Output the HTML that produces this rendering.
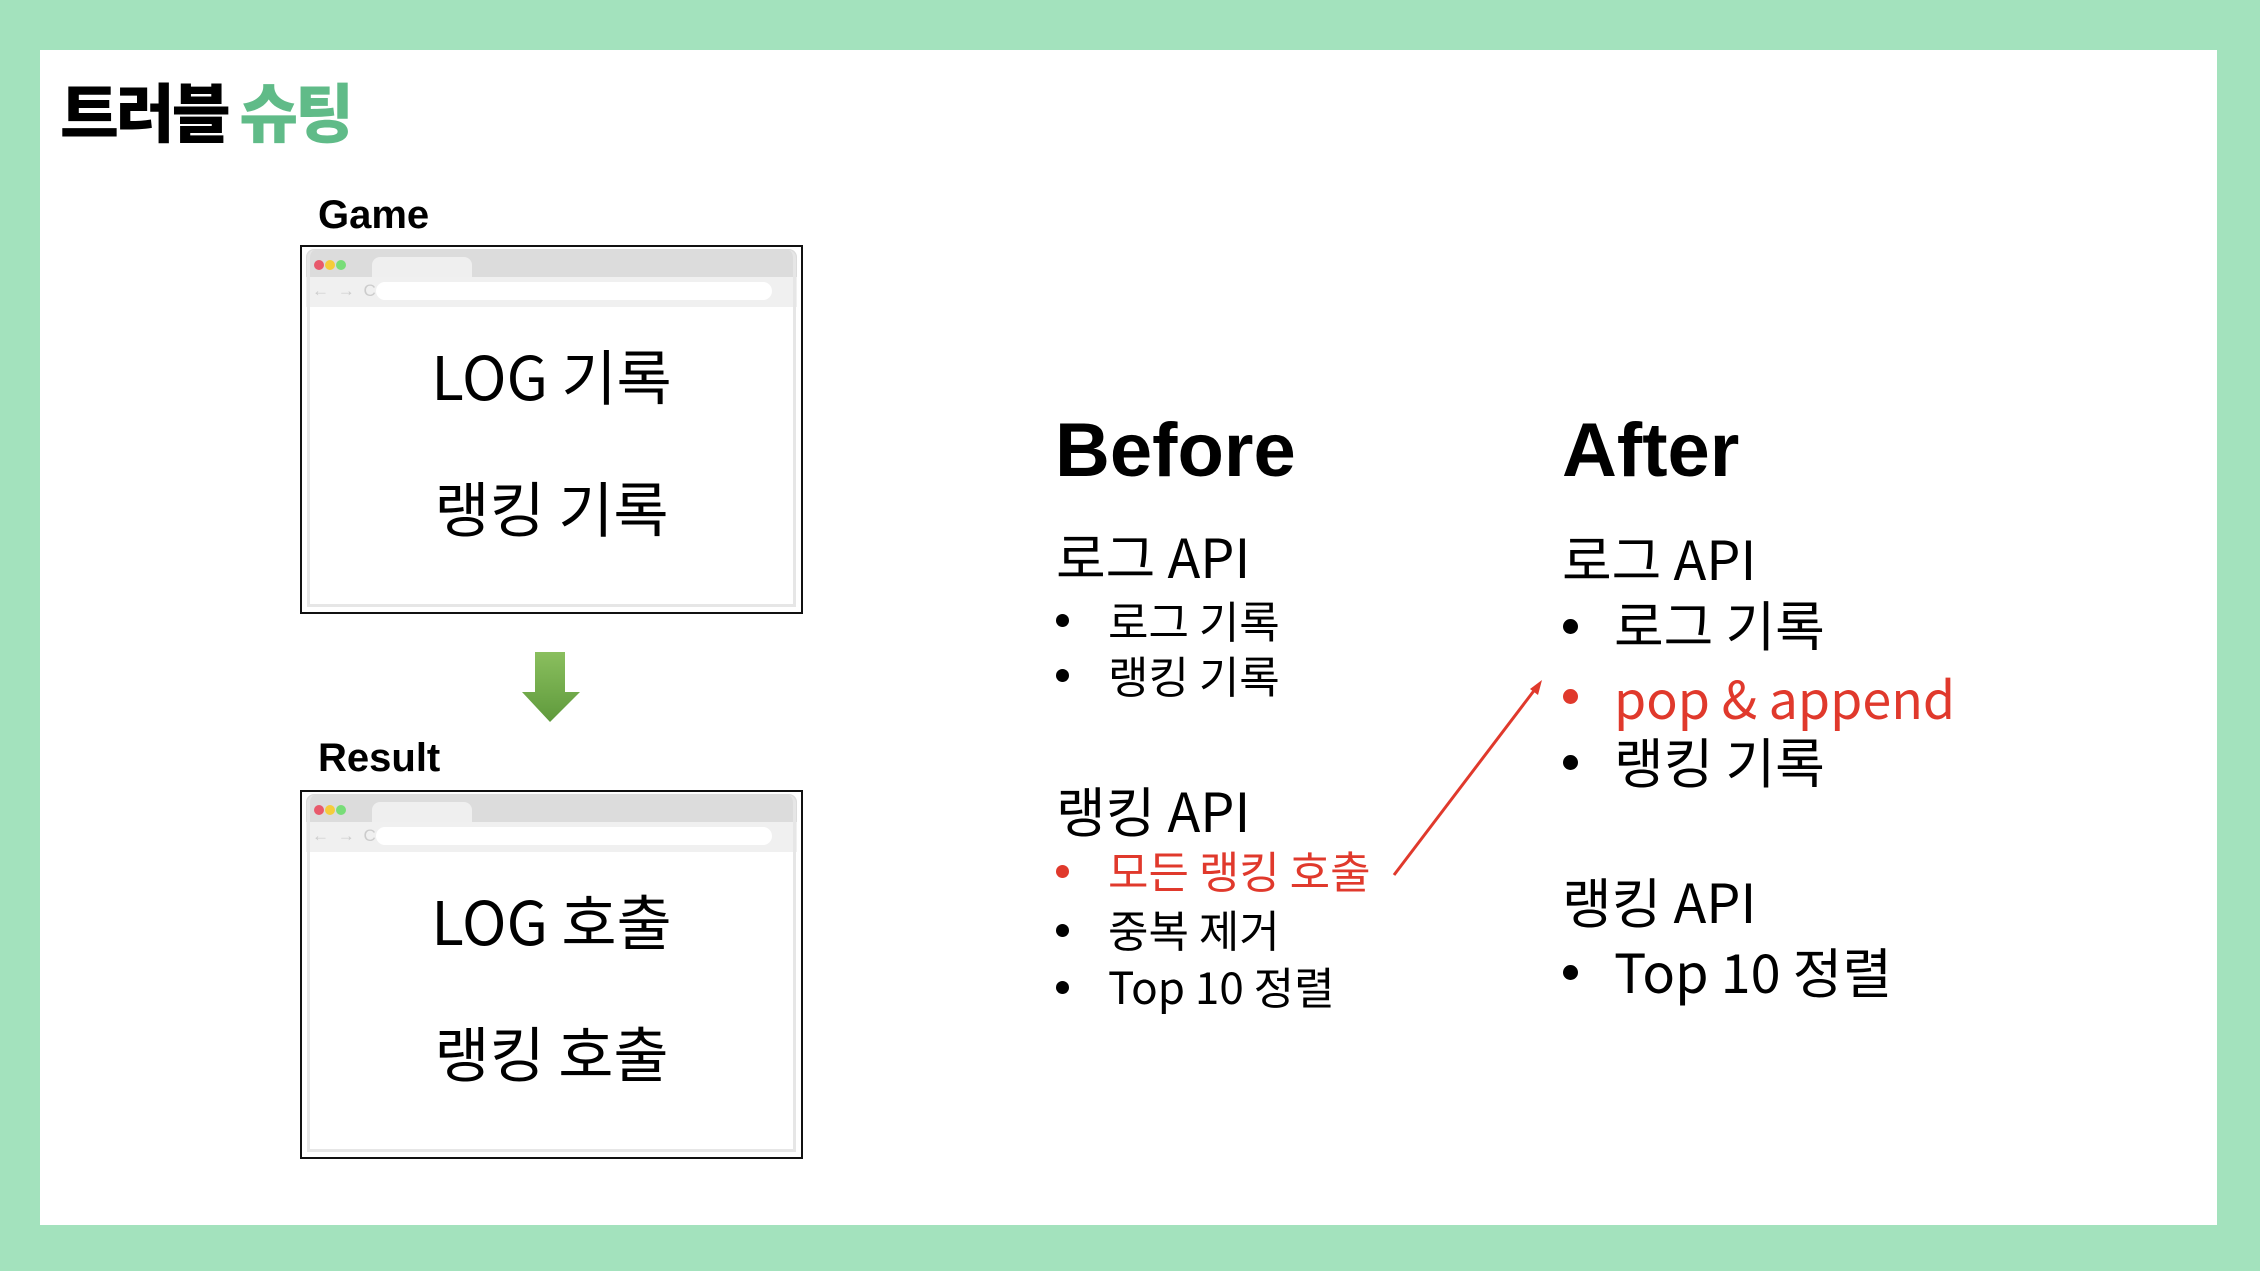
<!DOCTYPE html>
<html><head><meta charset="utf-8"><style>
body{margin:0;width:2260px;height:1271px;background:#a3e2bd;position:relative;overflow:hidden;font-family:"Liberation Sans","Noto Sans CJK KR",sans-serif;}
.w{position:absolute;left:40px;top:50px;width:2177px;height:1175px;background:#fff;}
.t{position:absolute;white-space:nowrap;line-height:1;}
.k{font-family:"Noto Sans CJK KR","Liberation Sans",sans-serif;}
.br{position:absolute;left:300px;width:503px;height:369px;border:2px solid #111;background:#fff;box-sizing:border-box;}
.br .in{position:absolute;left:5px;top:3px;right:5px;bottom:5px;border:3px solid #e6e6e6;border-top:none;border-radius:8px 8px 0 0;}
.br .tab{position:absolute;left:4px;top:2px;right:4px;height:28px;background:#dcdcdc;border-radius:8px 8px 0 0;}
.br .tb{position:absolute;left:70px;top:10px;width:100px;height:20px;background:#efefef;border-radius:8px 8px 0 0;}
.br .ad{position:absolute;left:4px;top:30px;right:4px;height:30px;background:#f0f0f0;}
.br .ad i{position:absolute;left:70px;top:5px;right:25px;height:18px;background:#fff;border-radius:9px;}
.dot{position:absolute;top:13px;width:10px;height:10px;border-radius:50%;}
.nav{position:absolute;left:10px;top:34px;font-size:17px;color:#ccc;letter-spacing:2px;}
.bul{position:absolute;width:13px;height:13px;border-radius:50%;background:#000;}
.bb{width:15px;height:15px;}
</style></head><body>
<div class="w"></div>
<div class="t k" style="left:60px;top:78px;font-size:64px;font-weight:900;letter-spacing:-3px;">트러블 <span style="color:#60bb88">슈팅</span></div>
<div class="t" style="left:318px;top:195px;font-size:40px;font-weight:bold;">Game</div>
<div class="t" style="left:318px;top:738px;font-size:40px;font-weight:bold;">Result</div>

<div class="br" style="top:245px">
<div class="tab"></div><div class="tb"></div><div class="ad"><i></i></div>
<div class="dot" style="left:12px;background:#e8596b"></div><div class="dot" style="left:23px;background:#f5cc3b"></div><div class="dot" style="left:34px;background:#78dd78"></div>
<div class="nav">← → C</div>
<div class="in"></div>
<div class="t k" style="left:0;right:0;text-align:center;top:98px;font-size:60px;">LOG 기록</div>
<div class="t k" style="left:0;right:0;text-align:center;top:230px;font-size:60px;">랭킹 기록</div>
</div>
<div class="br" style="top:790px">
<div class="tab"></div><div class="tb"></div><div class="ad"><i></i></div>
<div class="dot" style="left:12px;background:#e8596b"></div><div class="dot" style="left:23px;background:#f5cc3b"></div><div class="dot" style="left:34px;background:#78dd78"></div>
<div class="nav">← → C</div>
<div class="in"></div>
<div class="t k" style="left:0;right:0;text-align:center;top:98px;font-size:60px;">LOG 호출</div>
<div class="t k" style="left:0;right:0;text-align:center;top:230px;font-size:60px;">랭킹 호출</div>
</div>

<svg style="position:absolute;left:0;top:0" width="2260" height="1271">
<defs><linearGradient id="g" x1="0" x2="0" y1="0" y2="1"><stop offset="0" stop-color="#8abf5e"/><stop offset="1" stop-color="#5f9a3c"/></linearGradient></defs>
<polygon points="535,652 565,652 565,692 580,692 550,722 522,692 535,692" fill="url(#g)"/>
<line x1="1394" y1="875" x2="1536" y2="688" stroke="#e0392c" stroke-width="3"/>
<polygon points="1542,680 1530,689 1538,695" fill="#e0392c"/>
</svg>

<div class="t" style="left:1055px;top:413px;font-size:76px;font-weight:bold;">Before</div>
<div class="t" style="left:1562px;top:413px;font-size:76px;font-weight:bold;">After</div>

<div class="t k" style="left:1056px;top:528px;font-size:54px;">로그 API</div>
<div class="bul" style="left:1056px;top:614px"></div><div class="t k" style="left:1108px;top:597px;font-size:44px;">로그 기록</div>
<div class="bul" style="left:1056px;top:669px"></div><div class="t k" style="left:1108px;top:652px;font-size:44px;">랭킹 기록</div>
<div class="t k" style="left:1056px;top:782px;font-size:54px;">랭킹 API</div>
<div class="bul" style="left:1056px;top:865px;background:#e0392c"></div><div class="t k" style="left:1108px;top:847px;font-size:44px;color:#e0392c;">모든 랭킹 호출</div>
<div class="bul" style="left:1056px;top:924px"></div><div class="t k" style="left:1108px;top:906px;font-size:44px;">중복 제거</div>
<div class="bul" style="left:1056px;top:981px"></div><div class="t k" style="left:1108px;top:963px;font-size:44px;">Top 10 정렬</div>

<div class="t k" style="left:1562px;top:530px;font-size:54px;">로그 API</div>
<div class="bul bb" style="left:1563px;top:619px"></div><div class="t k" style="left:1614px;top:596px;font-size:54px;">로그 기록</div>
<div class="bul bb" style="left:1563px;top:689px;background:#e0392c"></div><div class="t k" style="left:1614px;top:671px;font-size:52px;color:#e0392c;">pop &amp; append</div>
<div class="bul bb" style="left:1563px;top:755px"></div><div class="t k" style="left:1614px;top:733px;font-size:54px;">랭킹 기록</div>
<div class="t k" style="left:1562px;top:873px;font-size:54px;">랭킹 API</div>
<div class="bul bb" style="left:1563px;top:965px"></div><div class="t k" style="left:1614px;top:943px;font-size:54px;">Top 10 정렬</div>
</body></html>
